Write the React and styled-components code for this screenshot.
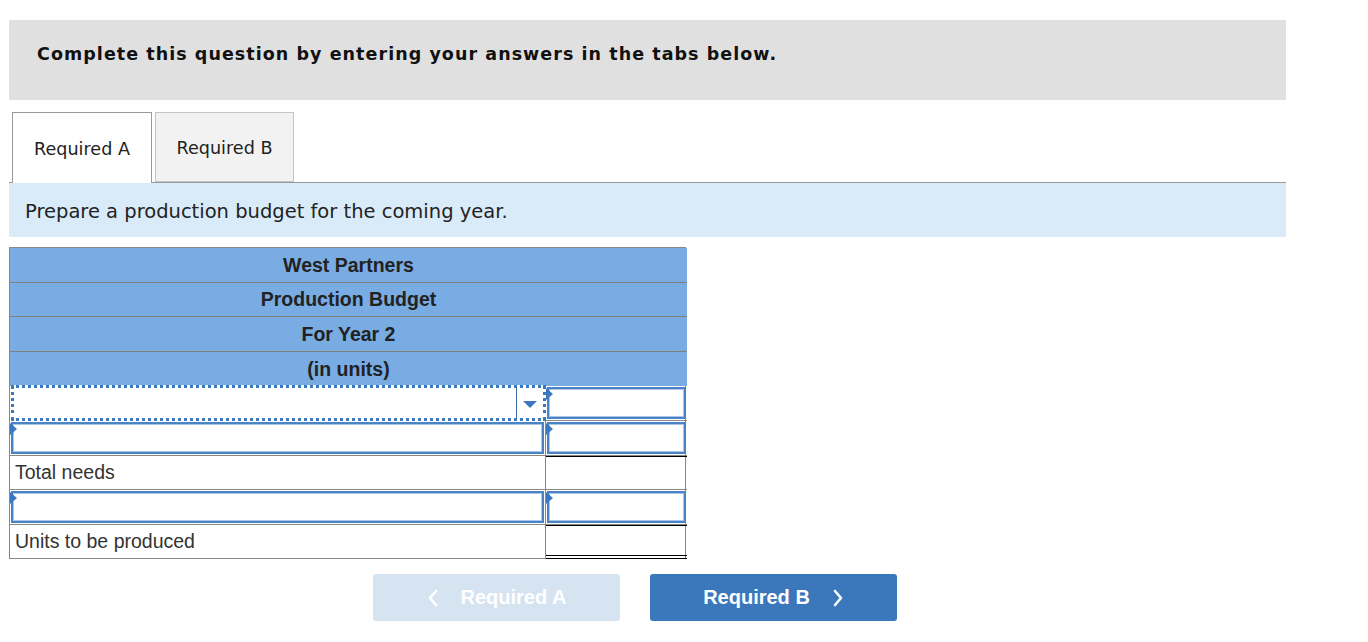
import React from "react";
import styled, { createGlobalStyle } from "styled-components";

const Global = createGlobalStyle`
  html, body { margin: 0; padding: 0; background: #fff; }
  body { font-family: "DejaVu Sans", Verdana, sans-serif; color: #000; }
  * { box-sizing: border-box; }
`;

const Page = styled.div`
  width: 1286px;
  padding: 20px 0 0 9px;
  display: flex;
  flex-direction: column;
`;

const Banner = styled.div`
  height: 80px;
  background: #e0e0e0;
  display: flex;
  align-items: center;
  padding: 0 0 12px 28px;
  font-family: "DejaVu Sans", Verdana, sans-serif;
  font-weight: bold;
  font-size: 17.5px;
  letter-spacing: 1.05px;
  color: #111;
`;

const TabBar = styled.div`
  margin-top: 12px;
  height: 71px;
  display: flex;
  align-items: flex-end;
  gap: 3px;
  padding-left: 3px;
  border-bottom: 1px solid #9a9a9a;
`;

const Tab = styled.div`
  height: ${(p) => (p.$active ? "71px" : "70px")};
  margin-bottom: ${(p) => (p.$active ? "-1px" : "0")};
  width: ${(p) => p.$w}px;
  background: ${(p) => (p.$active ? "#fff" : "#f2f2f2")};
  border: 1px solid ${(p) => (p.$active ? "#9a9a9a" : "#c4c4c4")};
  border-bottom: ${(p) => (p.$active ? "none" : "1px solid #c4c4c4")};
  display: flex;
  align-items: center;
  justify-content: center;
  font-family: "DejaVu Sans", Verdana, sans-serif;
  font-size: 17.6px;
  color: #222;
  padding-top: 2px;
`;

const Instruction = styled.div`
  height: 54px;
  background: #d9ebf9;
  display: flex;
  align-items: center;
  padding: 3px 0 0 16px;
  font-family: "DejaVu Sans", Verdana, sans-serif;
  font-size: 19.5px;
  color: #222;
`;

const Table = styled.div`
  margin-top: 10px;
  width: 677px;
  display: grid;
  grid-template-columns: 536px 141px;
  border-top: 1px solid #888;
  border-left: 1px solid #888;
  border-right: 1px solid #888;
  font-family: "Liberation Sans", Arial, sans-serif;
`;

const HeadRow = styled.div`
  grid-column: 1 / 3;
  height: 34.5px;
  background: #78ace3;
  border-bottom: ${(p) => (p.$last ? "none" : "1px solid #808080")};
  display: flex;
  align-items: center;
  justify-content: center;
  font-weight: bold;
  font-size: 19.5px;
  color: #222;
  padding-top: 1px;
`;

const LabelCell = styled.div`
  height: 34.5px;
  border-bottom: 1px solid #888;
  border-right: 1px solid #888;
  display: flex;
  align-items: center;
  padding: 1px 0 0 5px;
  font-size: 19.5px;
  color: #333;
`;

const AmountCell = styled.div`
  height: 34.5px;
  border-top: 1px solid #000;
  border-bottom: ${(p) => (p.$double ? "4px double #000" : "1px solid #888")};
`;

const FieldCell = styled.div`
  height: 34.5px;
  padding: 1px;
  border-bottom: 1px solid #888;
  border-right: ${(p) => (p.$divider ? "1px solid #888" : "none")};
  display: flex;
`;

const InputBox = styled.div`
  position: relative;
  flex: 1;
  border: 2px solid #4a82c6;
  box-shadow: inset 0 0 0 1px #a9c6ea;
  background: #fff;
`;

const Marker = styled.span`
  position: absolute;
  left: -3px;
  top: -1px;
  width: 0;
  height: 0;
  border-top: 6px solid transparent;
  border-bottom: 6px solid transparent;
  border-left: 7px solid #3b78c0;
`;

const SelectCell = styled.div`
  height: 36px;
  margin: -1px 0 0 1px;
  border: 3px dotted #3b78c0;
  display: flex;
  background: #fff;
`;

const SelectBody = styled.div`
  flex: 1;
  border-right: 1px solid #3b6fa8;
`;

const SelectArrow = styled.div`
  width: 26px;
  display: flex;
  align-items: center;
  justify-content: center;
  padding-top: 2px;
  &::before {
    content: "";
    border-left: 7px solid transparent;
    border-right: 7px solid transparent;
    border-top: 7px solid #3b78c0;
  }
`;

const NavRow = styled.div`
  display: flex;
  gap: 30px;
  margin-top: 15px;
  padding-left: 364px;
`;

const NavButton = styled.button`
  width: 247px;
  height: 47px;
  border: none;
  border-radius: 3px;
  background: ${(p) => (p.$disabled ? "#d6e3f1" : "#3b78bb")};
  color: #fff;
  font-family: "Liberation Sans", Arial, sans-serif;
  font-weight: bold;
  font-size: 20px;
  display: flex;
  align-items: center;
  justify-content: center;
  gap: 22px;
  padding: 0;
  cursor: ${(p) => (p.$disabled ? "default" : "pointer")};
`;

const Chevron = ({ dir }) => (
  <svg width="12" height="18" viewBox="0 0 12 18">
    <path
      d={dir === "left" ? "M9 2 L3 9 L9 16" : "M3 2 L9 9 L3 16"}
      fill="none"
      stroke="#fff"
      strokeWidth="2.6"
      strokeLinecap="round"
      strokeLinejoin="round"
    />
  </svg>
);

export default function App() {
  return (
    <>
      <Global />
      <Page>
        <Banner>Complete this question by entering your answers in the tabs below.</Banner>
        <TabBar>
          <Tab $active $w={140}>Required A</Tab>
          <Tab $w={139}>Required B</Tab>
        </TabBar>
        <Instruction>Prepare a production budget for the coming year.</Instruction>
        <Table>
          <HeadRow>West Partners</HeadRow>
          <HeadRow>Production Budget</HeadRow>
          <HeadRow>For Year 2</HeadRow>
          <HeadRow $last>(in units)</HeadRow>

          <SelectCell>
            <SelectBody />
            <SelectArrow />
          </SelectCell>
          <FieldCell>
            <InputBox><Marker /></InputBox>
          </FieldCell>

          <FieldCell $divider>
            <InputBox><Marker /></InputBox>
          </FieldCell>
          <FieldCell>
            <InputBox><Marker /></InputBox>
          </FieldCell>

          <LabelCell>Total needs</LabelCell>
          <AmountCell />

          <FieldCell $divider>
            <InputBox><Marker /></InputBox>
          </FieldCell>
          <FieldCell>
            <InputBox><Marker /></InputBox>
          </FieldCell>

          <LabelCell>Units to be produced</LabelCell>
          <AmountCell $double />
        </Table>
        <NavRow>
          <NavButton $disabled>
            <Chevron dir="left" />
            <span>Required A</span>
          </NavButton>
          <NavButton>
            <span>Required B</span>
            <Chevron dir="right" />
          </NavButton>
        </NavRow>
      </Page>
    </>
  );
}
